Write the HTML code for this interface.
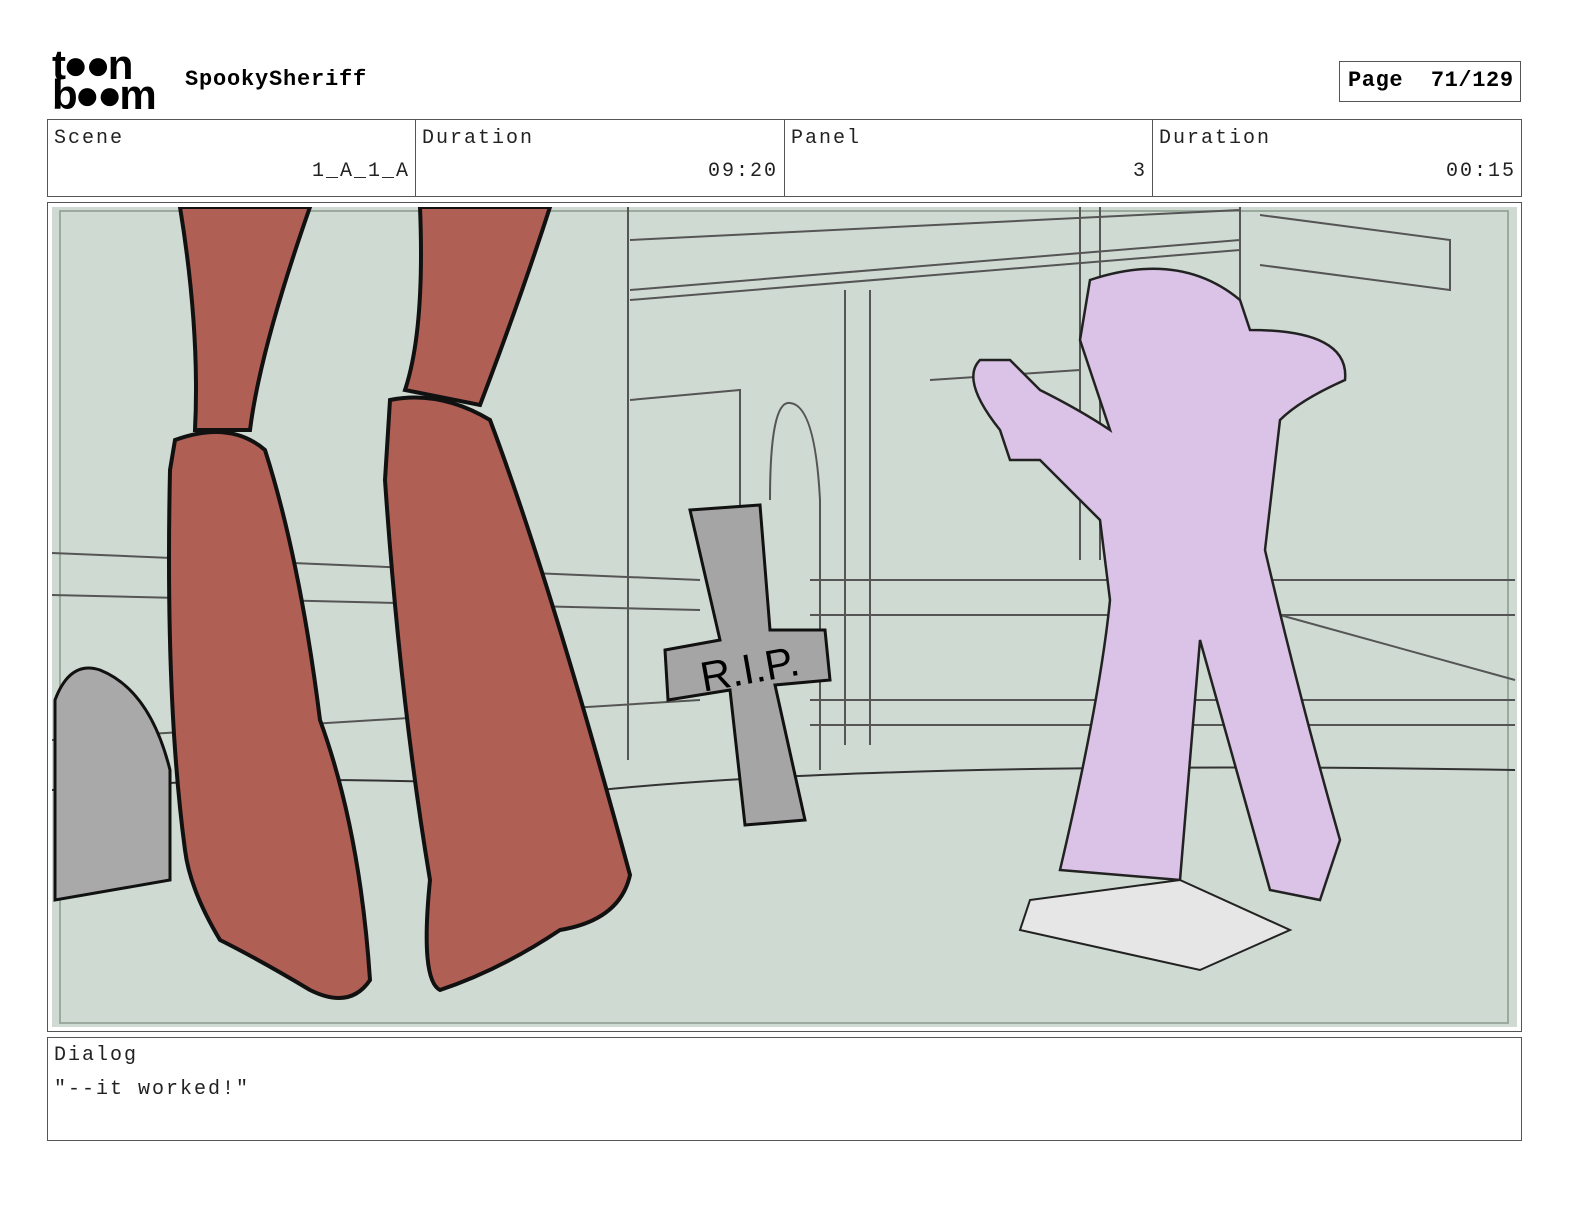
<!DOCTYPE html>
<html><head><meta charset="utf-8"><style>
body{margin:0;width:1584px;height:1224px;background:#fff;position:relative;font-family:"Liberation Mono",monospace;overflow:hidden}
.a{position:absolute}
.box{position:absolute;border:1px solid #555;box-sizing:border-box}
.lbl{font-size:20px;color:#222;letter-spacing:2px}
</style></head><body>
<div class="a" style="left:52px;top:50px;font-family:'Liberation Sans',sans-serif;font-weight:bold;font-size:42px;line-height:30px;letter-spacing:-3px;color:#000">t●●n<br>b●●m</div>
<div class="a" style="left:185px;top:67px;font-size:22px;font-weight:bold;letter-spacing:0.8px">SpookySheriff</div>
<div class="box" style="left:1339px;top:61px;width:182px;height:41px;font-size:22px;font-weight:bold;padding:6px 0 0 8px;letter-spacing:0.6px">Page&nbsp;&nbsp;71/129</div>

<div class="box" style="left:47px;top:119px;width:1475px;height:78px"></div>
<div class="a" style="left:415px;top:119px;width:1px;height:78px;background:#555"></div>
<div class="a" style="left:784px;top:119px;width:1px;height:78px;background:#555"></div>
<div class="a" style="left:1152px;top:119px;width:1px;height:78px;background:#555"></div>
<div class="a lbl" style="left:54px;top:127px">Scene</div>
<div class="a lbl" style="left:422px;top:127px">Duration</div>
<div class="a lbl" style="left:791px;top:127px">Panel</div>
<div class="a lbl" style="left:1159px;top:127px">Duration</div>
<div class="a lbl" style="right:1174px;top:160px">1_A_1_A</div>
<div class="a lbl" style="right:806px;top:160px">09:20</div>
<div class="a lbl" style="right:437px;top:160px">3</div>
<div class="a lbl" style="right:68px;top:160px">00:15</div>

<div class="box" style="left:47px;top:202px;width:1475px;height:830px"></div>
<svg class="a" style="left:52px;top:207px" width="1465" height="820" viewBox="52 207 1465 820">
<rect x="52" y="207" width="1465" height="820" fill="#cfdbd2"/>
<rect x="60" y="211" width="1448" height="812" fill="none" stroke="#9aab9e" stroke-width="2"/>
<g stroke="#555" stroke-width="2" fill="none">
<path d="M628 207V760M630 240L1240 210M630 300L1240 250M630 290L1240 240M845 290V745M870 290V745M1080 207V560M1100 207V560M1240 207V300M1260 215L1450 240V290L1260 265M630 400L740 390V745M930 380L1080 370M52 553L700 580M52 595L700 610M52 740L700 700M810 580H1515M810 615H1515M810 700H1515M810 725H1515M1280 615L1515 680"/>
<path d="M770 500Q770 400 790 403Q815 405 820 500V770"/>
</g>
<path d="M52 790Q300 770 600 790Q900 760 1515 770" stroke="#333" stroke-width="2" fill="none"/>
<path d="M55 900V700Q70 660 100 670Q150 690 170 770V880Z" fill="#a9a9a9" stroke="#111" stroke-width="3"/>
<path d="M690 510L760 505L770 630L825 630L830 680L775 685L805 820L745 825L730 690L668 700L665 650L720 640Z" fill="#a5a5a5" stroke="#111" stroke-width="3"/>
<text x="700" y="685" font-family="Liberation Sans,sans-serif" font-size="42" transform="rotate(-10 740 670)">R.I.P.</text>
<path d="M180 207Q200 330 195 430L250 430Q260 350 310 207Z" fill="#b05f55" stroke="#111" stroke-width="4"/>
<path d="M420 207Q425 330 405 390L480 405Q520 300 550 207Z" fill="#b05f55" stroke="#111" stroke-width="4"/>
<path d="M175 440Q230 420 265 450Q300 560 320 720Q360 830 370 980Q350 1010 310 990Q260 960 220 940Q190 890 185 850Q165 700 170 470Z" fill="#b05f55" stroke="#111" stroke-width="4"/>
<path d="M390 400Q440 390 490 420Q550 580 630 875Q620 920 560 930Q500 970 440 990Q420 980 430 880Q400 700 385 480Z" fill="#b05f55" stroke="#111" stroke-width="4"/>
<path d="M1090 280Q1180 250 1240 300L1250 330Q1350 330 1345 380Q1300 400 1280 420L1265 550Q1300 700 1340 840L1320 900L1270 890L1200 640L1180 880L1060 870Q1100 700 1110 600L1100 520Q1060 480 1040 460L1010 460L1000 430Q960 380 980 360L1010 360L1040 390Q1080 410 1110 430L1080 340Z" fill="#dac3e6" stroke="#222" stroke-width="2.5"/>
<path d="M1030 900L1180 880L1290 930L1200 970L1020 930Z" fill="#e6e6e6" stroke="#222" stroke-width="2"/>
</svg>

<div class="box" style="left:47px;top:1037px;width:1475px;height:104px"></div>
<div class="a lbl" style="left:54px;top:1044px">Dialog</div>
<div class="a lbl" style="left:54px;top:1078px">"--it worked!"</div>
</body></html>
